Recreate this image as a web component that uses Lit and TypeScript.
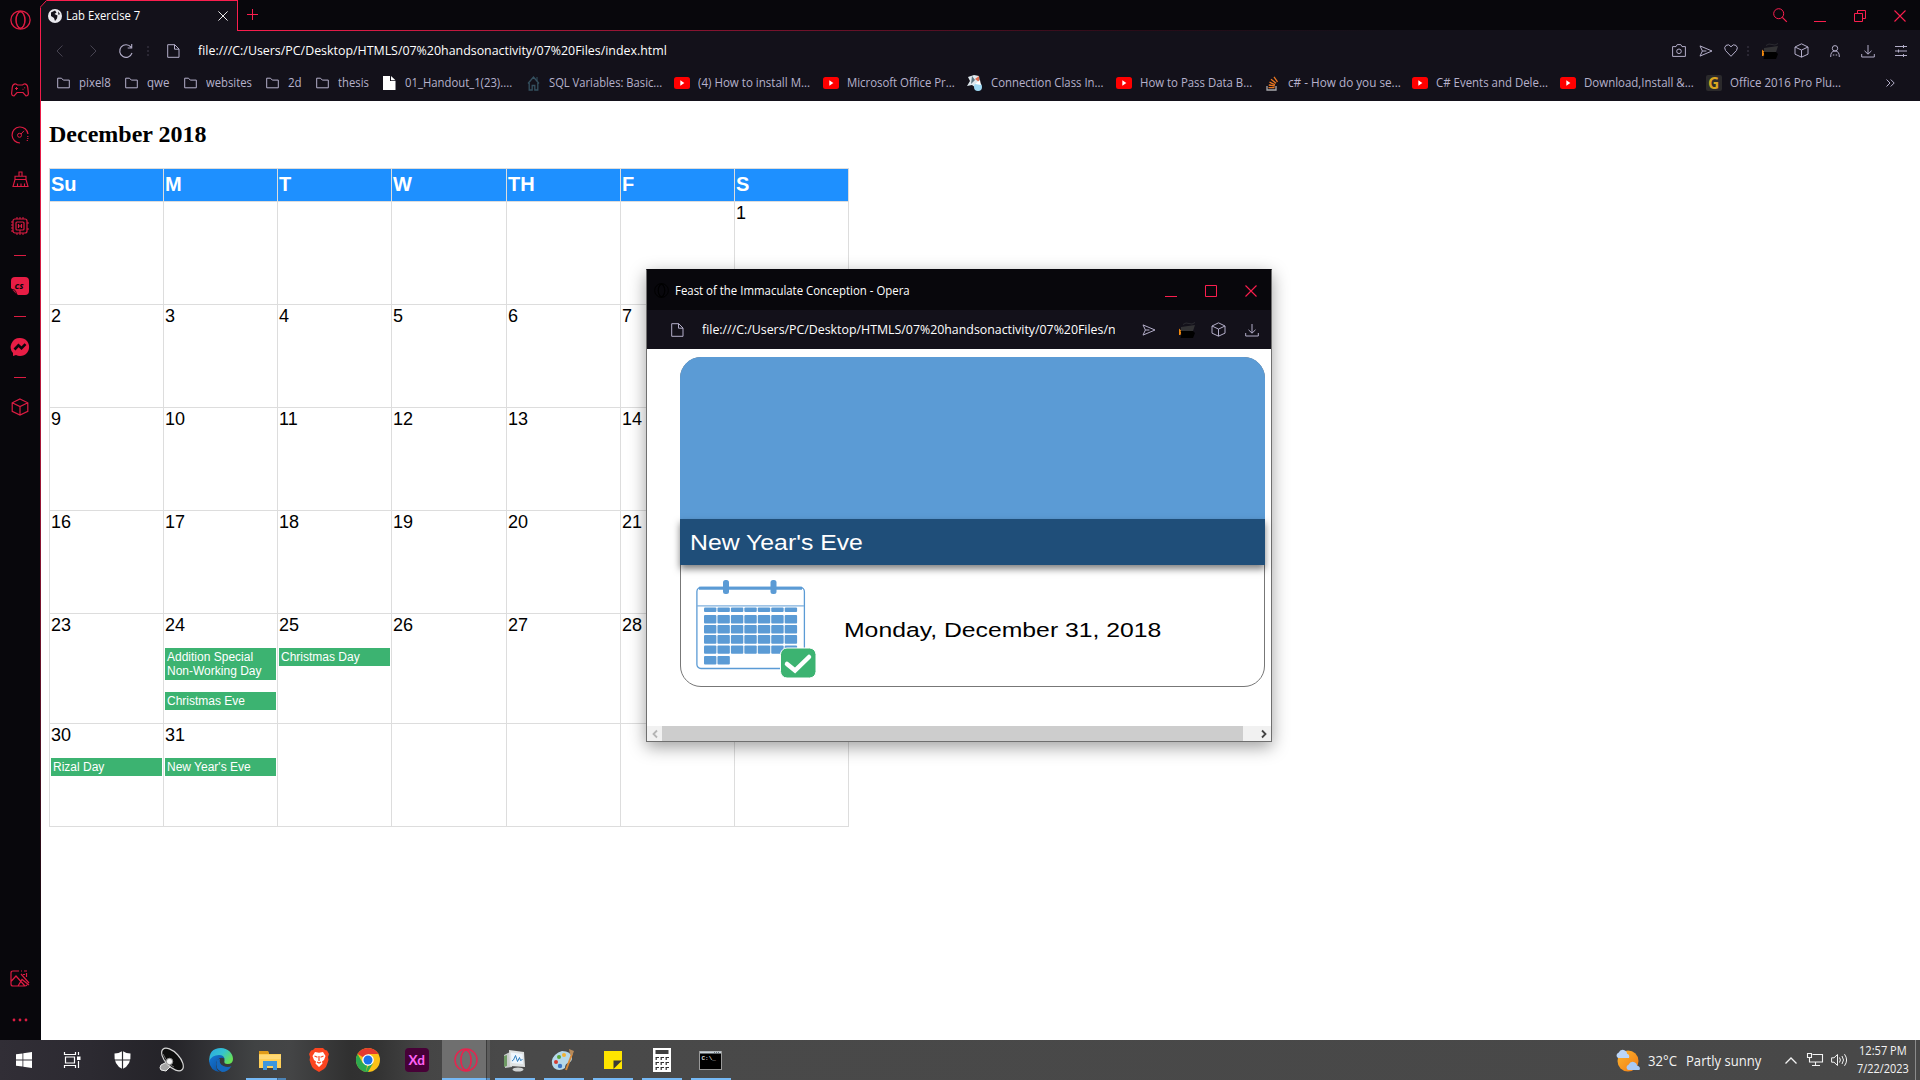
import { LitElement, html, css, svg, nothing, TemplateResult, SVGTemplateResult } from "lit";
import { customElement } from "lit/decorators.js";

const icon = (w: number, h: number, body: SVGTemplateResult, cls = ""): TemplateResult =>
  html`<svg class="ico ${cls}" width=${w} height=${h} viewBox="0 0 ${w} ${h}" fill="none" stroke="currentColor">${body}</svg>`;

/** Text drawn to an exact advance width. */
const fit = (text: string, w: number, cls = ""): TemplateResult =>
  html`<span class="fit ${cls}" style="width:${w}px"><span class="run">${text}</span></span>`;

/* ---------- browser glyphs ---------- */
const opera = (w: number, h: number) => html`<svg class="ico" width=${w} height=${h} viewBox="0 0 24 24" fill="none" stroke="currentColor" stroke-width="1.5" preserveAspectRatio="none">
  <circle cx="12" cy="12" r="11" /><ellipse cx="12" cy="12" rx="5" ry="10" /><path d="M9.500 1.500a8 10.500 0 0 1 0 21M14.500 1.500a8 10.500 0 0 0 0 21" stroke-width=".7" /></svg>`;
const folder = () => icon(13, 12, svg`<path d="M.7 1.200h3.800l1.800 1.900h6v7.700H.7z" />`);
const page = () => icon(13, 14, svg`<path d="M.7.700h7l4.300 4.300v8.300H.7zM7.500.700v4.500h4.500" />`);
const send = () => icon(14, 12, svg`<path d="M1 .900l12 5.100-12 5.100 2.400-5.100zM3.400 6h4" />`);
const cube = (s: number) => html`<svg class="ico" width=${s} height=${s} viewBox="0 0 18 18" fill="none" stroke="currentColor" stroke-width="1.200"><path d="M9 1l7.800 3.800v8.600L9 17l-7.800-3.600V4.800zM1.200 4.800L9 8.500l7.800-3.700M9 8.500V17" /></svg>`;
const download = () => icon(14, 14, svg`<path d="M7 1v9M3.500 6.800L7 10.200l3.500-3.400M.7 10v3h12.600v-3" />`);
const closeX = (s = 12) => html`<svg class="ico" width=${s} height=${s} viewBox="0 0 12 12" fill="none" stroke="currentColor" stroke-width="1.100"><path d="M.5.500l11 11M11.500.500l-11 11" /></svg>`;
const minimize = () => icon(12, 12, svg`<path d="M0 11.500h12" />`);
const dots = () => icon(2, 12, svg`<path d="M1 1v2M1 5v2M1 9v2" stroke="#2a2733" stroke-width="2" />`);
const gx = () => icon(16, 16, svg`<g stroke="none"><path d="M0 6.500l2.500 2.500-1 4H0z" fill="#f58a0c" /><path d="M2 5l14-2-2 6H2z" fill="#323234" /><path d="M1.500 9h12.500l2 2-2 5H1.500l1-4z" fill="#000" /></g><path d="M4 2.500q3-2.500 6-1t6-1" stroke="#2a2a30" />`);
const youtube = () => icon(16, 12, svg`<rect width="16" height="12" rx="2.500" fill="#f00" stroke="none" /><path d="M6.300 3.300v5.400L10.400 6z" fill="#fff" stroke="none" />`);

/* ---------- sidebar glyphs ---------- */
const gamepad = () => icon(18, 14, svg`<path d="M5 1Q2 .500 1.300 4L.600 10.500Q.800 13 3 13L6 9.500h6l3 3.500q2.200 0 2.400-2.500L16.700 4Q16 .500 13 1L11.500 2h-5z" stroke-width="1.200" /><path d="M4 5.500h3M5.500 4v3M11.500 6.300h1M13.200 4.800h1" />`);
const gauge = () => icon(18, 18, svg`<path d="M9 17A8 8 0 1 1 17 8" stroke-width="1.200" /><circle cx="8.500" cy="9.300" r="2" /><path d="M10 8l3-3.200" /><path d="M16.800 10v1M16.800 12v1M16.300 14v1" stroke-width="1.200" />`);
const broom = () => icon(17, 17, svg`<path d="M7 5V1h3v4M3 8.500V5.300h11v3.200zM3 8.500L1 15.500h15L14 8.500M5.500 15.500v-3M9 15.500v-3M12.500 15.500v-3" stroke-width="1.100" />`);
const chip = () => icon(18, 18, svg`<rect x="2" y="2" width="14" height="14" rx="2" stroke-width="1.200" /><rect x="5" y="5" width="8" height="8" rx="1" stroke-width="1.200" /><path d="M7.500 7v4M10.500 7v4M7.500 9h3" stroke-width="1.200" /><path d="M6 0v2M9 0v2M12 0v2M6 16v2M9 13v5M12 16v2M0 5h2M0 8h2M0 11h2M0 14h2M16 6h2M16 12h2" />`);
const csIcon = () => icon(18, 18, svg`<path d="M4 0h10q4 0 4 4v10q0 4-4 4H7L0 11V4Q0 0 4 0z" fill="#e71d45" stroke="none" /><path d="M1 12.500q4-.500 4.500 5z" fill="#e71d45" stroke="#08070c" stroke-width=".8" /><text x="3.500" y="11.500" font-size="7.500" font-weight="800" font-style="italic" font-family="Open Sans, sans-serif" fill="#08070c" stroke="none">CS</text>`);
const messenger = () => icon(18, 18, svg`<path d="M9 0a9 9 0 1 1-4 17l-3 1v-3A9 9 0 0 1 9 0z" fill="#e71d45" stroke="none" /><path d="M3.500 11.500l4-4.200 3 2.800 4-4" stroke="#08070c" stroke-width="2.600" />`);
const dash = () => icon(12, 1, svg`<path d="M0 .5h12" />`);
const picture = () => icon(20, 17, svg`<path d="M9 1H3Q1 1 1 3v11q0 2 2 2h12q2 0 2-1.500M1.500 11l4.500-5 9 10M8 16l4-6.500 7 5.500M11 4l8 9" stroke-width="1.200" /><path d="M11 1h1M14 1h3M16.500 3v4M13 4.500h2" stroke-width="1.200" />`);
const more = () => icon(16, 4, svg`<g fill="currentColor" stroke="none"><circle cx="2" cy="2" r="1.400" /><circle cx="8" cy="2" r="1.400" /><circle cx="14" cy="2" r="1.400" /></g>`);

/* ---------- bookmark glyphs ---------- */
const filePage = () => icon(13, 14, svg`<path d="M0 0h7v5h5.500v9H0z" fill="#fff" stroke="none" /><path d="M8 0l4.500 4.200H8z" fill="#fff" stroke="none" />`);
const house = () => icon(13, 15, svg`<path d="M1 7.500L6.500 1 12 7.500M2.200 7v7h3V9.500h2.600V14h3V7" stroke="#35505f" stroke-width="1.300" /><path d="M10 1v4" stroke="#35505f" />`);
const profiler = () => icon(16, 16, svg`<g stroke="none"><path d="M1 2l6-2 5 1 1 7-4 5-4-3-5 1 3-5z" fill="#dfe9ee" /><path d="M5 1l3 4-4 4z" fill="#5a7480" /><path d="M8 4l4-3v6z" fill="#df6c4f" /><ellipse cx="11" cy="12" rx="4" ry="4" fill="#9fd9f3" /><path d="M8 9l6 1-1-5z" fill="#fff" /></g>`);
const stack = () => icon(12, 15, svg`<path d="M1 10v4h9v-4" stroke="#a9a9ad" stroke-width="1.300" /><path d="M2.500 11.600h6M2.800 9l6 1M3.500 6.200l5.500 2.500M5 3.300l5 4M8 .800l3.500 5" stroke="#e87722" stroke-width="1.300" />`);
const gMark = () => icon(16, 16, svg`<rect width="16" height="16" rx="2" fill="#2b2a2c" stroke="none" /><text x="2" y="13.500" font-size="15.500" font-weight="700" font-family="Open Sans, sans-serif" fill="#d9a520" stroke="none">G</text>`);

interface Mark { glyph: () => TemplateResult; at: number; text: number; label: string; w: number; }
const MARKS: Mark[] = [
  { glyph: folder, at: 57, text: 79, label: "pixel8", w: 31.500 },
  { glyph: folder, at: 125, text: 147, label: "qwe", w: 22 },
  { glyph: folder, at: 184, text: 205.500, label: "websites", w: 46 },
  { glyph: folder, at: 266, text: 288, label: "2d", w: 13.500 },
  { glyph: folder, at: 316, text: 337.500, label: "thesis", w: 31 },
  { glyph: filePage, at: 383, text: 404.500, label: "01_Handout_1(23)....", w: 107.500 },
  { glyph: house, at: 527, text: 548.500, label: "SQL Variables: Basic...", w: 113 },
  { glyph: youtube, at: 674, text: 698, label: "(4) How to install M...", w: 112.500 },
  { glyph: youtube, at: 823, text: 847, label: "Microsoft Office Pr...", w: 108 },
  { glyph: profiler, at: 967, text: 991, label: "Connection Class In...", w: 112.500 },
  { glyph: youtube, at: 1116, text: 1140, label: "How to Pass Data B...", w: 112 },
  { glyph: stack, at: 1266, text: 1288, label: "c# - How do you se...", w: 112.500 },
  { glyph: youtube, at: 1412, text: 1436, label: "C# Events and Dele...", w: 111.500 },
  { glyph: youtube, at: 1560, text: 1584, label: "Download,Install &...", w: 110 },
  { glyph: gMark, at: 1706, text: 1730, label: "Office 2016 Pro Plu...", w: 111 },
];
const MARKS_END = 1886;

/* ---------- calendar data ---------- */
const HEAD = ["Su", "M", "T", "W", "TH", "F", "S"];
const EVENTS: Record<number, string[]> = {
  24: ["Addition Special Non-Working Day", "Christmas Eve"],
  25: ["Christmas Day"],
  30: ["Rizal Day"],
  31: ["New Year's Eve"],
};
/** Days that lie wholly behind the floating window are left blank. */
const COVERED = new Set([8, 15, 22, 29]);
const CELLS = Array.from({ length: 42 }, (_, i) => (i >= 6 && i <= 36 && !COVERED.has(i - 5) ? i - 5 : 0));

/* ---------- taskbar glyphs ---------- */
const winLogo = () => icon(16, 16, svg`<path d="M0 2.300l6.500-.900v6.200H0zM7.300 1.300L16 0v7.600H7.300zM0 8.400h6.500v6.200L0 13.700zM7.300 8.400H16V16l-8.700-1.200z" fill="#fff" stroke="none" />`);
const taskView = () => icon(17, 16, svg`<path d="M.5 0v2.500h11V0M.5 16v-2.500h11V16M1.500 5h9v6h-9zM14.500 0v3M14.500 9v7" stroke="#fff" stroke-width="1.200" /><rect x="13" y="4.500" width="3.500" height="3.500" fill="#fff" stroke="none" />`);
const shield = () => icon(17, 18, svg`<path d="M8.500 0q4 2.500 8 2.500Q17.500 14 8.500 18-.500 14 .500 2.500 4.500 2.500 8.500 0z" fill="#fff" stroke="none" /><path d="M8.500 0v18M0 9h17" stroke="#29282d" stroke-width="1.200" />`);
const speaker = () => icon(25, 25, svg`<path d="M8 14l-6 3q-2 3 0 5l5 1 5-5z" fill="#a5a5a5" stroke="#ececec" /><ellipse cx="13.500" cy="11.500" rx="14" ry="7" transform="rotate(47 13.500 11.500)" fill="#0d0d0d" stroke="#d6d6d6" stroke-width="1.200" /><path d="M4 6q2 6 8 10M6 12q4 5 9 7" stroke="#6d6d6d" /><circle cx="10.500" cy="13.500" r="3.200" fill="#f2f2f2" stroke="#8a8a8a" />`);
const edge = () => icon(24, 24, svg`<defs><linearGradient id="e1" x1="0" y1="0" x2="1" y2=".6"><stop offset="0" stop-color="#2aa8e4" /><stop offset=".55" stop-color="#35c3cf" /><stop offset="1" stop-color="#67e055" /></linearGradient><linearGradient id="e2" x1="0" y1="0" x2="1" y2="1"><stop offset="0" stop-color="#1577d4" /><stop offset="1" stop-color="#0b4d9b" /></linearGradient></defs><g stroke="none"><path d="M12 0C18.500 0 24 5 24 11q0 5-5.500 5-4 0-3-3.500Q16 8 10 8 4 8 .300 14-.500 0 12 0z" fill="url(#e1)" /><path d="M10 7Q3 7 0 13q1 10 11 11Q7 22 7 17q0-5 4-7 3-1 4.500 1Q15 7 10 7z" fill="url(#e2)" /><path d="M8 12q-3 9 5 12 6 0 9.500-6-3.500 2-8 0-5-2.500-3.500-7-2 0-3 1z" fill="#1568bd" /></g>`);
const explorer = () => icon(22, 20, svg`<g stroke="none"><path d="M0 1h9l1 3h12v14H0z" fill="#ffcf57" /><path d="M0 1h9l1 3H0z" fill="#e09c1a" /><path d="M0 5h22v4H0z" fill="#ffe08a" opacity=".6" /><path d="M4 20v-9h14v9h-4v-4H8v4z" fill="#3d96dc" /></g>`);
const brave = () => icon(20, 24, svg`<path d="M6 0h8l2 2 2 .500L20 6l-1 3q1 2-.500 6-1 4-3.500 6l-5 3-5-3Q2.500 19 1.500 15 0 11 1 9L0 6l2-3.500L4 2z" fill="#fb4520" stroke="none" /><path d="M6 4l4 .800L14 4l2.500 4-1.500 4-2 1.500.500 2L10 19l-3.500-3.500.500-2L5 12 3.500 8z" fill="#fff" stroke="none" /><path d="M5.500 8l3 1.200M14.500 8l-3 1.200M10 8v5M8 14l2 1 2-1" stroke="#fb4520" stroke-width="1.200" />`);
const chrome = () => icon(24, 24, svg`<g stroke="none"><circle cx="12" cy="12" r="12" fill="#fbc116" /><path d="M12 12L1.600 6A12 12 0 0 1 22.400 6H12z" fill="#e33b2e" /><path d="M12 12l-2 12A12 12 0 0 1 1.600 6l5.200 9z" fill="#2da94f" /><path d="M12 18l5.200-3L12 24q-2 0-2.200-.100z" fill="#2da94f" /><circle cx="12" cy="12" r="5.800" fill="#fff" /><circle cx="12" cy="12" r="4.500" fill="#1a73e8" /></g>`);
const xd = () => icon(24, 24, svg`<rect width="24" height="24" rx="4" fill="#470137" stroke="none" /><text x="3.600" y="16.700" font-size="13.500" font-weight="700" font-family="Lato, Open Sans, sans-serif" fill="#ff61f6" stroke="none">Xd</text>`);
const monitor = () => icon(24, 23, svg`<g stroke="none"><path d="M1 6l8-4v16l-7 1z" fill="#c9cccc" /><path d="M1 7l3-1v11l-3 1z" fill="#6f9a64" /><path d="M6 1l15 2 1 15-15-1z" fill="#dfe2e2" /><path d="M8 3.500l11.500 1.500.500 10-11.500-1z" fill="#eef6fd" /><ellipse cx="15" cy="20.500" rx="5.500" ry="2" fill="#cfd2d2" /></g><path d="M9 12l1.500-1 2-4.500 2 6 2-4 1 3 2-1" stroke="#2f7fbf" />`);
const paint = () => icon(25, 24, svg`<g stroke="none"><path d="M11 3Q20 3 21 10q0 4-4 5-3 1-3 5-6 4-11 0-5-7 1-13 3-3 7-4z" fill="#b5d8ea" /><circle cx="5" cy="14" r="2" fill="#d43b30" /><circle cx="8" cy="9" r="2" fill="#55a63a" /><circle cx="13" cy="7" r="2" fill="#f2b233" /><circle cx="9" cy="18" r="2.200" fill="#3c74c4" /></g><path d="M21 6l-6 16" stroke="#d88a3a" stroke-width="2" /><path d="M18 1l5 2-1.500 4-2.500-1z" fill="#b78a5a" stroke="none" />`);
const notes = () => icon(18, 18, svg`<path d="M0 0h18v18H0z" fill="#ffe500" stroke="none" /><path d="M9.500 18V9.500H18z" fill="#3b3a36" stroke="none" />`);
const calc = () => icon(18, 24, svg`<rect width="18" height="24" fill="#fff" stroke="none" /><path d="M2.500 2h13v4h-13z" fill="#3f3f3f" stroke="none" /><path d="M2.500 9.500h3.500M7.500 9.500h3.500M12.500 9.500h3.500M2.500 14.500h3.500M7.500 14.500h3.500M12.500 14.500h3.500M2.500 19.500h3.500M7.500 19.500h3.500M12.500 19.500h3.500M3.200 9v3M8.200 9v3M13.200 9v3M3.200 14v3M8.200 14v3M13.200 14v3M3.200 19v3M8.200 19v3M13.200 19v3" stroke="#333" stroke-width="1.200" />`);
const cmd = () => icon(23, 19, svg`<rect x=".5" y=".5" width="22" height="18" fill="#000" stroke="#999" /><path d="M1 1.500h21" stroke="#c9d3da" stroke-width="2" /><path d="M15 1.500h5" stroke="#69737a" stroke-dasharray="1 1" /><text x="2.500" y="9" font-size="6" font-weight="700" font-family="Liberation Mono, monospace" fill="#ddd" stroke="none">C:\\_</text>`);

const TASKS: { glyph: () => TemplateResult; state?: string }[] = [
  { glyph: shield }, { glyph: speaker }, { glyph: edge }, { glyph: explorer, state: "multi" },
  { glyph: brave }, { glyph: chrome }, { glyph: xd }, { glyph: () => opera(24, 24), state: "active" },
  { glyph: monitor, state: "open" }, { glyph: paint, state: "open" }, { glyph: notes, state: "open" },
  { glyph: calc, state: "open" }, { glyph: cmd, state: "open" },
];

const URL_BASE = "file:///C:/Users/PC/Desktop/HTMLS/07%20handsonactivity/07%20Files/";

@customElement("app-root")
export class AppRoot extends LitElement {
  static styles = css`
    :host { display: block; width: 1920px; height: 1080px; overflow: hidden; position: relative; background: #fff;
      font-family: "Open Sans", "Noto Sans", sans-serif; font-size: 12px; line-height: 16px; color: #fff; }
    * { box-sizing: border-box; }
    .ico { display: block; flex: none; overflow: visible; }
    .fit { display: inline-block; white-space: nowrap; flex: none; }
    .run { display: inline-block; transform-origin: 0 50%; }
    .desk { display: flex; height: 1040px; }
    .side { width: 40px; background: #08070c; color: #dc1c42; display: grid; justify-items: center; align-items: center;
      grid-template-rows: 40px 27px 46px 43px 47px 45px 14px 48px 13px 47px 14px 46px 1fr 44px 40px; flex: none; }
    .edge { width: 1px; flex: none; background: linear-gradient(#08070c 0 6px, #fa1e4e 7px, #d01a41 300px, #5c0f26 700px, #08070c 960px); }
    .main { flex: 1; min-width: 0; display: flex; flex-direction: column; }
    .tabs { height: 31px; background: #08070c; display: flex; color: #fa1e4e; }
    .tab { width: 197px; height: 31px; background: #13111a; border-top: 1px solid #fa1e4e; border-right: 1px solid #fa1e4e;
      display: grid; grid-template-columns: 14px 147.500px 10px; column-gap: 4px; padding: 0 0 1px 7px; align-items: center; color: #fff; position: relative; }
    .tab .corner { position: absolute; left: -1px; top: -1px; }
    .strip { flex: 1; display: grid; grid-template-columns: 29px 1fr repeat(3, 40px); align-items: center; justify-items: center;
      background: linear-gradient(90deg, #fa1e4e, #9d1636 350px, #2a0c18 900px, #13111a 1150px) bottom / 100% 1px no-repeat; }
    .strip .plus { margin-bottom: 3px; }
    .strip .find { justify-self: end; margin: 0 13px 2px 0; }
    .addr { height: 39px; background: #13111a; color: #b3aec9; display: grid; align-items: center; justify-items: center;
      grid-template-columns: 36px 32px 34px 10px 40px 500px 1fr 26px 27px 24px 10px 34px 29px 38px 27px 39px; }
    .addr .url { justify-self: start; padding-left: 4.500px; color: #fff; }
    .dim { color: #464350; }
    .marks { height: 31px; background: #13111a; color: #b6b1cc; display: flex; align-items: center; padding: 0 0 5px 16px; }
    .mark { display: grid; align-items: center; flex: none; }
    .page { flex: 1; background: #fff; color: #000; padding: 20px 8px; }
    h2 { margin: 0 0 20px; font: bold 24px/27px "Liberation Serif", "Times New Roman", serif; }
    .cal { width: 800px; display: grid; grid-template-columns: 114px 114px 114px 115px 114px 114px 114px;
      grid-template-rows: 34px 103px 103px 103px 103px 110px 103px; border-left: 1px solid #ddd;
      font: 18px/21px "Liberation Sans", Arial, sans-serif; }
    .cal > div { border-right: 1px solid #ddd; border-bottom: 1px solid #ddd; padding: 1px; }
    .cal > .hd { background: #1e90ff; color: #fff; font-weight: bold; font-size: 20px; line-height: 23px; border-top: 1px solid #ddd; padding: 4px 1px; }
    .ev { background: #3cb371; color: #fff; font-size: 12px; line-height: 14px; padding: 2px; margin: 0 0 12px; width: 111px; }
    .num { margin-bottom: 12px; }
    .win { position: absolute; left: 646px; top: 269px; width: 626px; height: 473px; border: 1px solid #6f6f6f; border-top-color: #08070c; background: #fff;
      box-shadow: 0 5px 16px rgba(0,0,0,.38); display: flex; flex-direction: column; }
    .wtitle { height: 40px; background: #08070c; display: grid; grid-template-columns: 28px 1fr 40px 40px 40px; align-items: center; justify-items: center; color: #fa1e4e; padding-top: 1px; }
    .wtitle .name { justify-self: start; color: #fff; }
    .wtitle .ghost { display: grid; color: #000; }
    .waddr { height: 39px; background: #13111a; color: #b3aec9; display: grid; align-items: center; justify-items: center;
      grid-template-columns: 60px 414px 55px 22px 40px 27px; }
    .waddr .url { color: #fff; overflow: hidden; justify-self: start; margin-left: -5px; width: 413px; display: flex; }
    .body { flex: 1; padding: 8px 7px 0 33px; }
    .card { height: 330px; border: 1px solid #777; border-radius: 21px; display: flex; flex-direction: column; font-family: "Liberation Sans", Arial, sans-serif; width: 585px; }
    .hero { height: 162px; background: #5b9bd5; border-radius: 21px 21px 0 0; margin: -1px -1px 0; }
    .band { height: 46px; background: #1f4e79; color: #fff; margin: 0 -1px; padding: 2px 10px 0; box-shadow: 0 4px 7px rgba(0,0,0,.5); display: flex; align-items: center; font-size: 21.500px; flex: none; }
    .foot { flex: 1; display: flex; font-size: 20.500px; color: #000; padding: 15px 0 0 15px; gap: 26.500px; }
    .foot .fit { margin-top: 42px; line-height: 16px; }
    .hscroll { height: 15px; background: #f1f1f1; display: grid; grid-template-columns: 15px 581px 1fr; align-items: center; justify-items: center; flex: none; }
    .thumb { background: #cdcdcd; width: 100%; height: 15px; }
    .hscroll .end { justify-self: end; margin-right: 4px; }
    .task { height: 40px; display: flex; background: linear-gradient(90deg, #312e36 0, #2c2a31 90px, #242328 170px, #414344 255px, #444546 290px, #303030 350px, #323232 375px, #454545 425px, #494949 500px, #484848 100%); }
    .t { height: 40px; display: grid; place-items: center; width: 49px; flex: none; position: relative; }
    .t.s { width: 48px; }
    .gap { width: 2px; }
    .active { background: linear-gradient(90deg, transparent 1px, #6f6f6f 1px 45px, #3c3c3c 45px 46px, #5c5c5c 46px); color: #e5254f; }
    .t::after { content: ""; position: absolute; bottom: 0; left: 5px; width: 40px; height: 2px; }
    .open::after { background: #76b9f5; }
    .active::after { left: 1px; width: 48px; background: linear-gradient(90deg, #76b9f5 44px, #3c648a 44px 45px, #5990c2 45px); }
    .multi::after { left: 1px; background: linear-gradient(90deg, #76b9f5 31px, #3c648a 31px 32px, #4c83b5 32px); }
    .tray { margin-left: auto; display: grid; width: 304px; grid-template-columns: 32px 38px 99px 22px 24px 20px 1fr 5px; align-items: center; font-size: 15px; line-height: 20px; color: #f3f3f3; padding-bottom: 1px; }
    .clock { display: grid; justify-items: center; font-size: 12px; line-height: 18px; }
    .clock .run { vertical-align: top; }
    .peek { width: 1px; height: 40px; background: #8b8b8b; }
  `;

  firstUpdated() {
    this.renderRoot.querySelectorAll<HTMLElement>(".fit").forEach((box) => {
      const run = box.firstElementChild as HTMLElement;
      run.style.transform = `scaleX(${parseFloat(box.style.width) / run.offsetWidth})`;
    });
  }

  private sidebar() {
    return html`<div class="side">${opera(21, 20)}<i></i>${gamepad()}${gauge()}${broom()}${chip()}${dash()}${csIcon()}${dash()}${messenger()}${dash()}${cube(18)}<i></i>${picture()}${more()}</div>`;
  }

  private topBars() {
    return html`
      <div class="tabs">
        <div class="tab">
          <svg class="corner" width="7" height="8" fill="none"><path d="M0 0h7L0 8z" fill="#08070c" /><path d="M0 7.500L6.500.500" stroke="#fa1e4e" /></svg>
          ${icon(14, 14, svg`<circle cx="7" cy="7" r="7" fill="#e9e9ee" stroke="none" /><path d="M3 3.500l4-2 1.500 2-2 1.500 3 1.500-.500 3-2 2.500-1-3-3-2zM10 2.500l2 2.500-1.500 1z" fill="#13111a" stroke="none" />`)}
          ${fit("Lab Exercise 7", 74)}${closeX(10)}
        </div>
        <div class="strip">
          ${icon(11, 11, svg`<path d="M5.500 0v11M0 5.500h11" />`, "plus")}
          ${icon(14, 14, svg`<circle cx="5.700" cy="5.700" r="5" /><path d="M9.300 9.300l4.500 4.500" stroke-width="1.200" />`, "find")}
          ${minimize()}
          ${icon(12, 12, svg`<path d="M.5 3.500h8v8h-8zM3.500 3.500v-3h8v8h-3" />`)}
          ${closeX()}
        </div>
      </div>
      <div class="addr">
        ${icon(7, 12, svg`<path d="M6.500.500L1 6l5.500 5.500" />`, "dim")}
        ${icon(7, 12, svg`<path d="M.5.500L6 6 .5 11.500" />`, "dim")}
        ${icon(14, 14, svg`<path d="M12 3.200A6.300 6.300 0 1 0 13 9M12.700 0v4H8.700" stroke-width="1.100" />`)}
        ${dots()}${page()}
        <div class="url">${fit(URL_BASE + "index.html", 469)}</div><i></i>
        ${icon(14, 13, svg`<path d="M.6 2.600H4l1.200-2h3.600l1.200 2h3.400v9.800H.6z" /><circle cx="7" cy="7.300" r="2.300" />`)}
        ${send()}
        ${icon(14, 13, svg`<path d="M7 12.300L1.500 6.500Q-.500 3.500 2 1.400 5-.500 7 2.800 9-.500 12 1.400q2.500 2.100.5 5.100z" />`)}
        ${dots()}${gx()}${cube(15)}
        ${icon(10, 12, svg`<circle cx="5" cy="3.300" r="2.700" /><path d="M.7 12Q.5 6 5 6t4.300 6M2.800 10h1.500M5.700 10h1.500" />`)}
        ${download()}
        ${icon(12, 12, svg`<path d="M0 1.500h12M0 6h12M0 10.500h12M8.500 0v3M3.500 4.500v3M8.500 9v3" />`)}
      </div>
      <div class="marks">
        ${MARKS.map((m, i) => {
          const end = i + 1 < MARKS.length ? MARKS[i + 1].at : MARKS_END;
          return html`<div class="mark" style="width:${end - m.at}px;grid-template-columns:${m.text - m.at}px 1fr">${m.glyph()}${fit(m.label, m.w)}</div>`;
        })}
        ${icon(9, 8, svg`<path d="M.5.500L4 4 .5 7.500M4.700.500L8.200 4 4.700 7.500" />`)}
      </div>`;
  }

  private calendar() {
    return html`<div class="page"><h2>December 2018</h2><div class="cal">
      ${HEAD.map((h) => html`<div class="hd">${h}</div>`)}
      ${CELLS.map((n) => html`<div>${n ? html`<div class="num">${n}</div>` : nothing}${(EVENTS[n] ?? []).map((e) => html`<div class="ev">${e}</div>`)}</div>`)}
    </div></div>`;
  }

  private calendarArt() {
    const cells: SVGTemplateResult[] = [];
    const rows = [[27.500, 4.500], [35, 8.500], [45, 8.500], [55, 8.700], [65.500, 8.300], [76, 8.500]];
    rows.forEach(([y, h], r) => {
      for (let c = 0; c < (r === 5 ? 2 : 7); c++)
        cells.push(svg`<rect x=${8 + c * 13.450} y=${y} width="12.400" height=${h} rx="1" />`);
    });
    return html`<svg class="ico" width="121" height="98" viewBox="0 0 121 98">
      <rect x=".9" y="7.500" width="107.500" height="81" rx="4" fill="#fff" stroke="#5b9bd5" stroke-width="1.300" />
      <path d="M3 8.200h103" stroke="#5b9bd5" stroke-width="3" /><path d="M1 25.800h107" stroke="#7fb0de" stroke-width="1.300" />
      <rect x="27" y="0" width="6" height="14" rx="2.500" fill="#5b9bd5" /><rect x="74.500" y="0" width="6" height="14" rx="2.500" fill="#5b9bd5" />
      <g fill="#5b9bd5">${cells}</g>
      <rect x="84.500" y="68" width="35.500" height="30" rx="6.500" fill="#3cb371" stroke="#fff" />
      <path d="M91 84l8 6.500 14-13.500" fill="none" stroke="#fff" stroke-width="4.500" stroke-linecap="round" /></svg>`;
  }

  private popup() {
    return html`<div class="win">
      <div class="wtitle"><span class="ghost">${opera(15, 15)}</span><span class="name">${fit("Feast of the Immaculate Conception - Opera", 235)}</span>
        ${minimize()}${icon(12, 12, svg`<path d="M.5.500h11v11H.5z" />`)}${closeX()}</div>
      <div class="waddr">${page()}<div class="url">${fit(URL_BASE + "n", 414)}</div>${send()}${gx()}${cube(15)}${download()}</div>
      <div class="body"><div class="card">
        <div class="hero"></div>
        <div class="band">${fit("New Year's Eve", 173)}</div>
        <div class="foot">${this.calendarArt()}${fit("Monday, December 31, 2018", 317.500)}</div>
      </div></div>
      <div class="hscroll">${icon(6, 8, svg`<path d="M5 .500L1.500 4 5 7.500" stroke="#b5b5b5" stroke-width="1.800" />`)}<div class="thumb"></div>${icon(6, 8, svg`<path d="M1 .500L4.500 4 1 7.500" stroke="#444" stroke-width="1.800" />`, "end")}</div>
    </div>`;
  }

  private taskbar() {
    return html`<div class="task">
      <div class="t s">${winLogo()}</div><div class="t s">${taskView()}</div><div class="gap"></div>
      ${TASKS.map((t) => html`<div class="t ${t.state ?? ""}">${t.glyph()}</div>`)}
      <div class="tray">
        ${icon(24, 23, svg`<defs><linearGradient id="sun" x1="0" y1="0" x2="1" y2="1"><stop offset="0" stop-color="#fdb62f" /><stop offset="1" stop-color="#f07a13" /></linearGradient></defs><g stroke="none"><circle cx="12" cy="12" r="10.500" fill="url(#sun)" /><path d="M2.500 9a2.700 2.700 0 0 1 0-5.200Q5-1 9 1.500q2.500 1.500 2 3.200 3 .800 2 4.300z" fill="#bcd6f8" /><path d="M12.500 21a2.700 2.700 0 0 1 0-5.200Q15 11 19 13.500q2 1 2 3 4 1 2.500 4.500z" fill="#a9c9f5" /></g>`)}
        ${fit("32°C", 29)}${fit("Partly sunny", 75)}
        ${icon(12, 7, svg`<path d="M.5 6.500L6 1l5.500 5.500" stroke-width="1.300" />`)}
        ${icon(16, 14, svg`<path d="M5.500 1.500h10v7.500H2.500V6M8.500 9v3.500M5 12.500h8M.5.500h4v4h-4zM2.500 4.500V9" stroke-width="1.100" />`)}
        ${icon(17, 14, svg`<path d="M.6 4.800H3L6.500 1.500v11L3 9.200H.6zM8.500 4.500q1.800 2.500 0 5M11 3q3 4 0 8M13.500 1.200q4.200 5.800 0 11.600" />`)}
        <div class="clock">${fit("12:57 PM", 48)}${fit("7/22/2023", 52)}</div>
        <div class="peek"></div>
      </div>
    </div>`;
  }

  render() {
    return html`<div class="desk">${this.sidebar()}<div class="edge"></div><div class="main">${this.topBars()}${this.calendar()}</div></div>
      ${this.taskbar()}${this.popup()}`;
  }
}
